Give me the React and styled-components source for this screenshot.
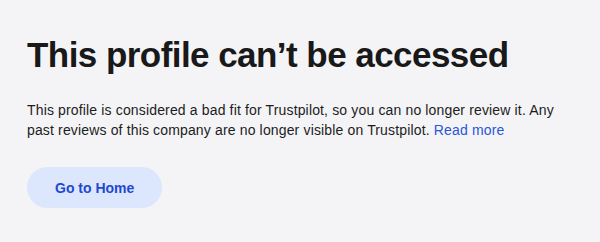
import React from 'react';
import styled, { createGlobalStyle } from 'styled-components';

const GlobalStyle = createGlobalStyle`
  html, body {
    margin: 0;
    padding: 0;
    background: #f4f4f7;
  }
  body {
    font-family: "Liberation Sans", Arial, sans-serif;
    color: #1a1a1a;
  }
`;

const Page = styled.main`
  min-height: 242px;
  box-sizing: border-box;
  padding: 34px 27px 0;
  background: #f4f4f7;
`;

const Title = styled.h1`
  margin: 0;
  font-size: 35px;
  line-height: 42px;
  font-weight: 700;
  color: #191919;
  letter-spacing: -0.55px;
`;

const Message = styled.p`
  margin: 24px 0 0;
  font-size: 14px;
  line-height: 20px;
  color: #1c1c1c;
  letter-spacing: 0.15px;
  max-width: 546px;
`;

const ReadMore = styled.a`
  color: #2a56d8;
  text-decoration: none;
  cursor: pointer;
`;

const HomeButton = styled.button`
  margin-top: 27px;
  height: 41px;
  padding: 0 28px;
  border: none;
  border-radius: 999px;
  background: #dce6fd;
  color: #1f49cf;
  font-family: inherit;
  font-size: 14px;
  font-weight: 700;
  cursor: pointer;
`;

export default function App() {
  return (
    <>
      <GlobalStyle />
      <Page>
        <Title>This profile can’t be accessed</Title>
        <Message>
          This profile is considered a bad fit for Trustpilot, so you can no longer review it. Any
          past reviews of this company are no longer visible on Trustpilot.{' '}
          <ReadMore href="#">Read more</ReadMore>
        </Message>
        <HomeButton>Go to Home</HomeButton>
      </Page>
    </>
  );
}
